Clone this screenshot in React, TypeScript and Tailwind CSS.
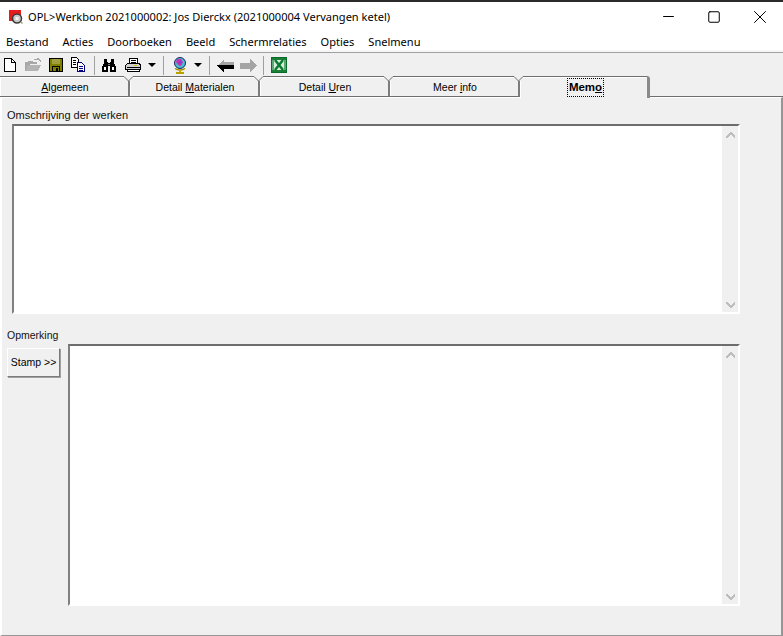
import { Minus, Square, X } from "lucide-react";

const menus = ["Bestand", "Acties", "Doorboeken", "Beeld", "Schermrelaties", "Opties", "Snelmenu"];

function AppIcon() {
  return (
    <svg width="16" height="16" viewBox="0 0 16 16">
      <rect x="1" y="1" width="12" height="11" fill="#e81c1c" />
      <circle cx="9" cy="9.500" r="4.500" fill="#c8c8c8" stroke="#3a3a3a" strokeWidth="1.500" />
      <rect x="7.500" y="8" width="3" height="3" fill="#f4f4f4" />
      <path d="M12.500 13l2 1.500" stroke="#9aa070" strokeWidth="1.500" />
    </svg>
  );
}

function NewIcon() {
  return (
    <svg width="16" height="16" viewBox="0 0 16 16" shapeRendering="crispEdges">
      <path d="M2.500 1.500h7l4 4v9h-11z" fill="#fff" stroke="#000" />
      <path d="M9.500 1.500v4h4" fill="none" stroke="#000" />
    </svg>
  );
}

function OpenIcon() {
  return (
    <svg width="18" height="16" viewBox="0 0 18 16" shapeRendering="crispEdges">
      <path d="M1 5h2l1-1h4l1 1h4v2H6l-3 7H1z" fill="#a8a8a8" />
      <path d="M4 8h13l-3 6H2z" fill="#b4b4b4" />
      <path d="M10 2h2l2-1 3 3-1 1-2-2h-4z" fill="#a8a8a8" />
    </svg>
  );
}

function SaveIcon() {
  return (
    <svg width="16" height="16" viewBox="0 0 16 16" shapeRendering="crispEdges">
      <rect x="1" y="1" width="14" height="14" fill="#000" />
      <rect x="2" y="2" width="12" height="7" fill="#808000" />
      <rect x="4" y="2" width="8" height="5" fill="#a0a040" />
      <rect x="2" y="9" width="2" height="5" fill="#808000" />
      <rect x="12" y="9" width="2" height="5" fill="#808000" />
      <rect x="5" y="10" width="6" height="4" fill="#808000" />
      <rect x="8" y="11" width="2" height="3" fill="#000" />
    </svg>
  );
}

function CopyIcon() {
  return (
    <svg width="16" height="16" viewBox="0 0 16 16" shapeRendering="crispEdges">
      <path d="M1.500 0.500h5l2 2v8h-7z" fill="#fff" stroke="#000" />
      <path d="M3 3h3M3 5h3M3 7h3" stroke="#000" />
      <path d="M7.500 5.500h4l3 3v6h-7z" fill="#fff" stroke="#000080" />
      <path d="M9 9h4M9 11h4M9 13h4" stroke="#000080" />
    </svg>
  );
}

function BinocularsIcon() {
  return (
    <svg width="16" height="15" viewBox="0 0 16 15" shapeRendering="crispEdges">
      <path d="M3 1h3v3h1v1h2V4h1V1h3v4l2 4v5h-6V8H7v6H1V9l2-4z" fill="#000" />
      <rect x="3" y="9" width="2" height="3" fill="#fff" />
      <rect x="11" y="9" width="2" height="3" fill="#fff" />
      <rect x="7" y="6" width="2" height="1" fill="#808080" />
    </svg>
  );
}

function PrintIcon() {
  return (
    <svg width="16" height="16" viewBox="0 0 16 16" shapeRendering="crispEdges">
      <path d="M4.500 1.500h8v5h-8z" fill="#fff" stroke="#000" />
      <path d="M6 3h5M6 5h5" stroke="#000" />
      <path d="M2.500 6.500h12l1 2v4h-15v-4z" fill="#d0d0d0" stroke="#000" />
      <rect x="9" y="8" width="3" height="1" fill="#e0c020" />
      <path d="M2.500 12.500h12v2h-12z" fill="#fff" stroke="#000" />
      <rect x="2" y="10" width="13" height="1" fill="#000" />
    </svg>
  );
}

function GlobeIcon() {
  return (
    <svg width="16" height="18" viewBox="0 0 16 18">
      <circle cx="8" cy="7" r="5.500" fill="#48c0d0" stroke="#182060" />
      <path d="M5 3l4 0 2 3-2 4-3-1-2-3z" fill="#c830b8" />
      <path d="M7 5l2 0 0 2-2 1z" fill="#7040e0" />
      <path d="M3 12.500c2 2 8 2 10 0" fill="none" stroke="#a09000" strokeWidth="1.400" />
      <path d="M7 14h2v2H7z" fill="#c8b000" />
      <path d="M4 16h8v2H4z" fill="#b8a000" />
    </svg>
  );
}

function Caret() {
  return <div className="w-0 h-0 border-x-[4px] border-x-transparent border-t-[4px] border-t-black" />;
}

function BackIcon() {
  return (
    <svg width="17" height="13" viewBox="0 0 17 13" shapeRendering="crispEdges">
      <path d="M7 0v3h10v3H2V5z" fill="#a4a4a4" />
      <path d="M0 6h17v4H7v3H6L0 7z" fill="#000" />
    </svg>
  );
}

function ForwardIcon() {
  return (
    <svg width="17" height="13" viewBox="0 0 17 13" shapeRendering="crispEdges">
      <path d="M10 0l7 6.500-7 6.500V9.500H0v-6h10z" fill="#a4a4a4" />
    </svg>
  );
}

function ExcelIcon() {
  return (
    <svg width="16" height="16" viewBox="0 0 16 16" shapeRendering="crispEdges">
      <rect x="0.500" y="0.500" width="15" height="15" fill="#d8ecd8" stroke="#0a6a2a" />
      <rect x="1" y="1" width="14" height="2" fill="#1a8038" />
      <rect x="1" y="13" width="14" height="2" fill="#1a8038" />
      <rect x="1" y="3" width="2" height="10" fill="#5aa878" />
      <rect x="13" y="3" width="2" height="10" fill="#5aa878" />
      <path d="M4 3l8 10M12 3L4 13" stroke="#0a7a30" strokeWidth="2.500" shapeRendering="auto" />
    </svg>
  );
}

function Sep() {
  return <div className="w-px h-[19px] bg-[#a0a0a0]" />;
}

// the little v between two neighbouring tabs
function Notch() {
  return (
    <svg width="9" height="5" viewBox="0 0 9 5" className="absolute -right-[5px] -top-px z-20">
      <rect width="9" height="5" fill="#f0f0f0" />
      <path d="M0 0.500l4.500 4.500 4.500-4.500" fill="none" stroke="#6e6e6e" />
    </svg>
  );
}

function Tab({ label, hot, active }: { label: string; hot: number; active?: boolean }) {
  return (
    <div
      className={
        active
          ? "w-[130px] h-[22px] relative z-10 flex items-center justify-center bg-[#f0f0f0] border-t border-t-[#6e6e6e] shadow-[inset_1px_1px_0_#fff] rounded-tr-[3px] border-r-[3px] border-r-[#8a8a8a]"
          : "w-[130px] h-[21px] relative flex items-center justify-center bg-[#f0f0f0] border-t border-t-[#6e6e6e] border-b border-b-[#6e6e6e] border-r-2 border-r-[#7c7c7c] shadow-[inset_1px_1px_0_#fff]"
      }
    >
      <span
        className={
          active
            ? "ml-[4px] font-['Liberation_Sans',sans-serif] text-[11.500px] font-bold text-black leading-[17px] px-px outline-1 outline-dotted outline-black -mt-px"
            : "ml-[2px] mt-[2px] font-['Liberation_Sans',sans-serif] text-[10.500px] text-black leading-none"
        }
      >
        {label.slice(0, hot)}
        <span className="underline">{label[hot]}</span>
        {label.slice(hot + 1)}
      </span>
      {!active && <Notch />}
    </div>
  );
}

function ScrollArrow({ up }: { up?: boolean }) {
  return (
    <svg width="9" height="6" viewBox="0 0 9 6" shapeRendering="crispEdges" className={up ? "" : "rotate-180"}>
      <path d="M4 0h1l4 4v2H8L4.500 2.500 1 6H0V4z" fill="#bdbdbd" />
    </svg>
  );
}

function MemoBox({ className }: { className: string }) {
  return (
    <div
      className={`flex justify-end bg-white border-t-2 border-l-2 border-t-[#6d6d6d] border-l-[#808080] border-r-2 border-b-2 border-r-white border-b-white ${className}`}
    >
      <div className="w-[16px] bg-[#f0f0f0] flex flex-col items-center justify-between pt-[6px] pb-[4px]">
        <ScrollArrow up />
        <ScrollArrow />
      </div>
    </div>
  );
}

export default function App() {
  return (
    <div className="w-[783px] h-[636px] flex flex-col bg-[#f0f0f0] overflow-hidden">
      <div className="h-[2px] bg-[#2b2b2b]" />

      {/* title bar */}
      <div className="h-[29px] bg-white flex items-center pl-[8px]">
        <AppIcon />
        <span className="ml-[4px] font-['Noto_Sans',sans-serif] text-[11.060px] text-black leading-none whitespace-nowrap">
          OPL&gt;Werkbon 2021000002: Jos Dierckx (2021000004 Vervangen ketel)
        </span>
        <div className="ml-auto flex items-center text-black">
          <div className="w-[46px] flex justify-center">
            <Minus size={17} strokeWidth={1} absoluteStrokeWidth />
          </div>
          <div className="w-[46px] flex justify-center">
            <Square size={14} strokeWidth={1} absoluteStrokeWidth />
          </div>
          <div className="w-[46px] flex justify-center">
            <X size={22} strokeWidth={1} absoluteStrokeWidth />
          </div>
        </div>
      </div>

      {/* menu */}
      <div className="h-[19px] bg-white flex items-center pl-[6px] pt-[2px] gap-[14px] font-['Noto_Sans',sans-serif] text-[11.060px] leading-none text-black">
        {menus.map((m) => (
          <span key={m}>{m}</span>
        ))}
      </div>
      <div className="h-[2px] bg-[#f6f6f6]" />
      <div className="h-px bg-[#a0a0a0]" />

      {/* toolbar */}
      <div className="h-[23px] flex items-center pl-[2px] pt-px bg-[#f0f0f0]">
        <NewIcon />
        <div className="ml-[6px]">
          <OpenIcon />
        </div>
        <div className="ml-[6px]">
          <SaveIcon />
        </div>
        <div className="ml-[6px]">
          <CopyIcon />
        </div>
        <div className="ml-[8px]">
          <Sep />
        </div>
        <div className="ml-[6px]">
          <BinocularsIcon />
        </div>
        <div className="ml-[8px]">
          <PrintIcon />
        </div>
        <div className="ml-[7px]">
          <Caret />
        </div>
        <div className="ml-[7px]">
          <Sep />
        </div>
        <div className="ml-[8px]">
          <GlobeIcon />
        </div>
        <div className="ml-[6px]">
          <Caret />
        </div>
        <div className="ml-[7px]">
          <Sep />
        </div>
        <div className="ml-[7px]">
          <BackIcon />
        </div>
        <div className="ml-[6px]">
          <ForwardIcon />
        </div>
        <div className="ml-[6px]">
          <Sep />
        </div>
        <div className="ml-[7px]">
          <ExcelIcon />
        </div>
      </div>

      {/* tabs */}
      <div className="flex items-start h-[21px] relative z-10">
        <Tab label="Algemeen" hot={0} />
        <Tab label="Detail Materialen" hot={7} />
        <Tab label="Detail Uren" hot={7} />
        <Tab label="Meer info" hot={5} />
        <Tab label="Memo" hot={3} active />
        <div className="flex-1 h-[21px] border-b border-b-[#6e6e6e]" />
      </div>

      {/* panel */}
      <div className="flex-1 border-t border-t-white border-l-2 border-l-white border-r-2 border-r-[#969696] border-b border-b-[#969696] pt-[11px] flex flex-col">
        <div className="pl-[5px] font-['Liberation_Sans',sans-serif] text-[11px] leading-[13px] text-[#111]">
          Omschrijving der werken
        </div>
        <MemoBox className="ml-[10px] mt-[2px] w-[728px] h-[190px]" />
        <div className="mt-[15px] pl-[5px] font-['Liberation_Sans',sans-serif] text-[10.500px] leading-[13px] text-[#111]">
          Opmerking
        </div>
        <div className="flex items-start">
          <button className="ml-[5px] mt-[6px] w-[53px] h-[29px] bg-[#f0f0f0] border border-t-white border-l-white border-r-[#7a7a7a] border-b-[#7a7a7a] shadow-[1px_1px_0_#a0a0a0] font-['Liberation_Sans',sans-serif] text-[10.500px] text-black leading-none">
            Stamp &gt;&gt;
          </button>
          <MemoBox className="ml-[8px] mt-[2px] w-[672px] h-[262px]" />
        </div>
      </div>
    </div>
  );
}
